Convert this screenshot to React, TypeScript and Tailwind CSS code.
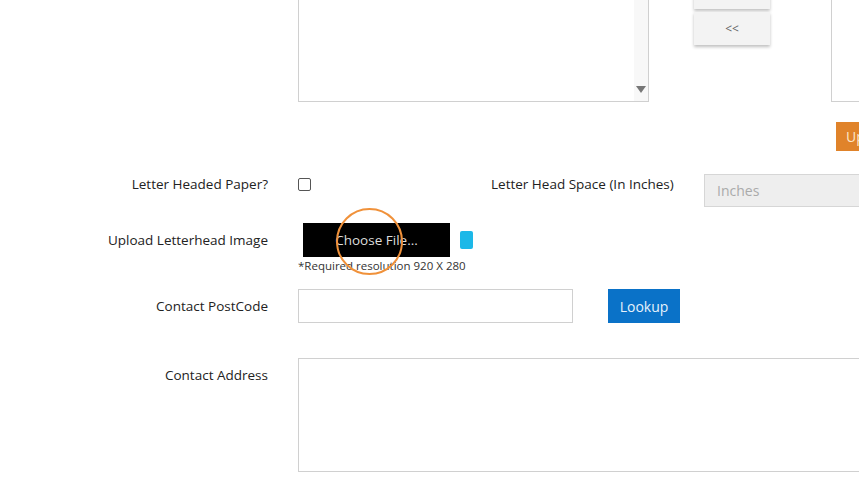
import React from 'react';

const font = { fontFamily: '"Open Sans", "Liberation Sans", sans-serif' };

function Label({ children, top = false }: { children: React.ReactNode; top?: boolean }) {
  return (
    <div
      className={`w-[268px] shrink-0 whitespace-nowrap text-right text-[13.5px] text-[#222] ${top ? 'pt-[7px]' : ''}`}
    >
      {children}
    </div>
  );
}

export default function App() {
  return (
    <div
      className="relative w-[859px] h-[481px] overflow-hidden bg-white text-[#222]"
      style={font}
    >
      {/* selection lists + move buttons */}
      <div className="flex mt-[-39px] h-[141px]">
        <div className="w-[298px] shrink-0" />
        <div className="relative h-[141px] w-[351px] shrink-0 border border-[#d0d0d0] bg-white">
          <div className="absolute right-0 top-0 bottom-0 w-[14px] bg-[#f8f8f8]">
            <svg
              className="absolute left-[2px] bottom-[7px]"
              width="10"
              height="8"
              viewBox="0 0 10 8"
            >
              <path d="M0 0 L10 0 L5 7 Z" fill="#777" />
            </svg>
          </div>
        </div>
        <div className="ml-[45px] flex w-[76px] shrink-0 flex-col gap-[3px] pt-[15px]">
          <button className="h-[33px] bg-[#f3f3f3] text-[12px] text-[#666] shadow-[0_2px_3px_rgba(0,0,0,0.25)]">
            &gt;&gt;
          </button>
          <button className="h-[33px] bg-[#f3f3f3] text-[12px] text-[#666] shadow-[0_2px_3px_rgba(0,0,0,0.25)]">
            &lt;&lt;
          </button>
        </div>
        <div className="ml-[61px] h-[141px] w-[200px] shrink-0 border border-[#d0d0d0]" />
      </div>

      <div className="mt-[20px] flex">
        <div className="w-[836px] shrink-0" />
        <button className="h-[29px] w-[80px] shrink-0 bg-[#e0832a] pl-[10px] text-left text-[14px] text-[#fde6c8]">
          Update
        </button>
      </div>

      {/* letter head */}
      <div className="mt-[23px] flex h-[33px] items-start">
        <Label>Letter Headed Paper?</Label>
        <div className="ml-[30px] w-[193px] shrink-0 pt-[4px]">
          <div className="h-[13px] w-[13px] rounded-[2px] border border-[#555] bg-white" />
        </div>
        <div className="w-[213px] shrink-0 whitespace-nowrap text-[13.5px]">
          Letter Head Space (In Inches)
        </div>
        <div className="flex h-[33px] w-[200px] shrink-0 items-center border border-[#d6d6d6] bg-[#eeeeee] px-[12px] text-[14px] text-[#aaa]">
          Inches
        </div>
      </div>

      <div className="mt-[16px] flex h-[34px] items-center">
        <Label>Upload Letterhead Image</Label>
        <div className="ml-[35px] flex h-[34px] w-[147px] shrink-0 items-center justify-center bg-black text-[13.5px] text-[#ddd]">
          Choose File...
        </div>
        <div className="ml-[10px] h-[18px] w-[13px] rounded-[2px] bg-[#1cb8e8]" />
      </div>
      <div className="flex">
        <div className="w-[298px] shrink-0" />
        <div className="whitespace-nowrap text-[11.5px] leading-[18px] text-[#333]">
          *Required resolution 920 X 280
        </div>
      </div>

      {/* postcode */}
      <div className="mt-[14px] flex h-[34px] items-center">
        <Label>Contact PostCode</Label>
        <div className="ml-[30px] h-[34px] w-[275px] shrink-0 border border-[#d0d0d0]" />
        <button className="ml-[35px] h-[34px] w-[72px] shrink-0 bg-[#0a72c8] text-[14px] text-[#e6f1fb]">
          Lookup
        </button>
      </div>

      {/* address */}
      <div className="mt-[35px] flex">
        <Label top>Contact Address</Label>
        <div className="ml-[30px] h-[114px] w-[600px] shrink-0 border border-[#d0d0d0]" />
      </div>

      {/* highlight ring */}
      <div className="absolute left-[336px] top-[208px] h-[67px] w-[67px] rounded-full border-[2.5px] border-[#f0913a]" />
    </div>
  );
}
